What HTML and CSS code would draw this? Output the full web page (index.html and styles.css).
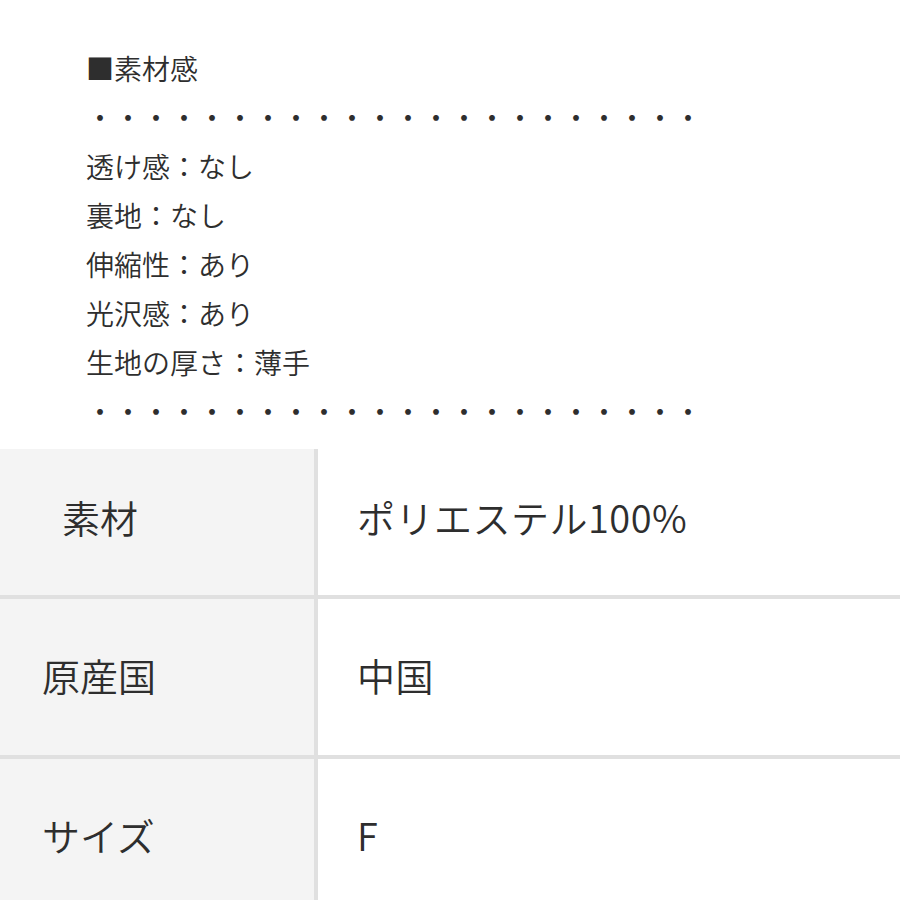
FILE: index.html
```html
<!DOCTYPE html>
<html lang="ja">
<head>
<meta charset="utf-8">
<link rel="stylesheet" href="styles.css">
</head>
<body>
<div class="notes">
  <p>■素材感</p>
  <p class="dots">・・・・・・・・・・・・・・・・・・・・・・</p>
  <p>透け感：なし</p>
  <p>裏地：なし</p>
  <p>伸縮性：あり</p>
  <p>光沢感：あり</p>
  <p>生地の厚さ：薄手</p>
  <p class="dots">・・・・・・・・・・・・・・・・・・・・・・</p>
</div>
<div class="spec">
  <div class="label first"><span class="indent">素材</span></div>
  <div class="value first">ポリエステル100%</div>
  <div class="label">原産国</div>
  <div class="value">中国</div>
  <div class="label">サイズ</div>
  <div class="value">F</div>
</div>
</body>
</html>
```
FILE: styles.css
```css
html, body {
  margin: 0;
  padding: 0;
  background: #fff;
  overflow: hidden;
}
body {
  font-family: "Noto Sans CJK JP", "Noto Sans", sans-serif;
  font-weight: 350;
  color: #2e2e2e;
}
.notes {
  padding: 44px 0 0 86px;
  font-size: 28px;
  line-height: 49px;
}
.notes p {
  margin: 0;
  white-space: nowrap;
}
.spec {
  margin-top: 13px;
  display: grid;
  grid-template-columns: 314px 1fr;
  grid-template-rows: 146px 156px 156px;
  column-gap: 4px;
  row-gap: 4px;
  background: #e0e0e0;
  font-size: 38px;
}
.label, .value {
  display: flex;
  align-items: center;
  padding-bottom: 6px;
}
.label.first, .value.first {
  padding-bottom: 12px;
}
.label {
  background: #f4f4f4;
  padding-left: 42px;
}
.value {
  background: #fff;
  padding-left: 39px;
  letter-spacing: 0.5px;
}
.indent {
  padding-left: 20px;
}
```
